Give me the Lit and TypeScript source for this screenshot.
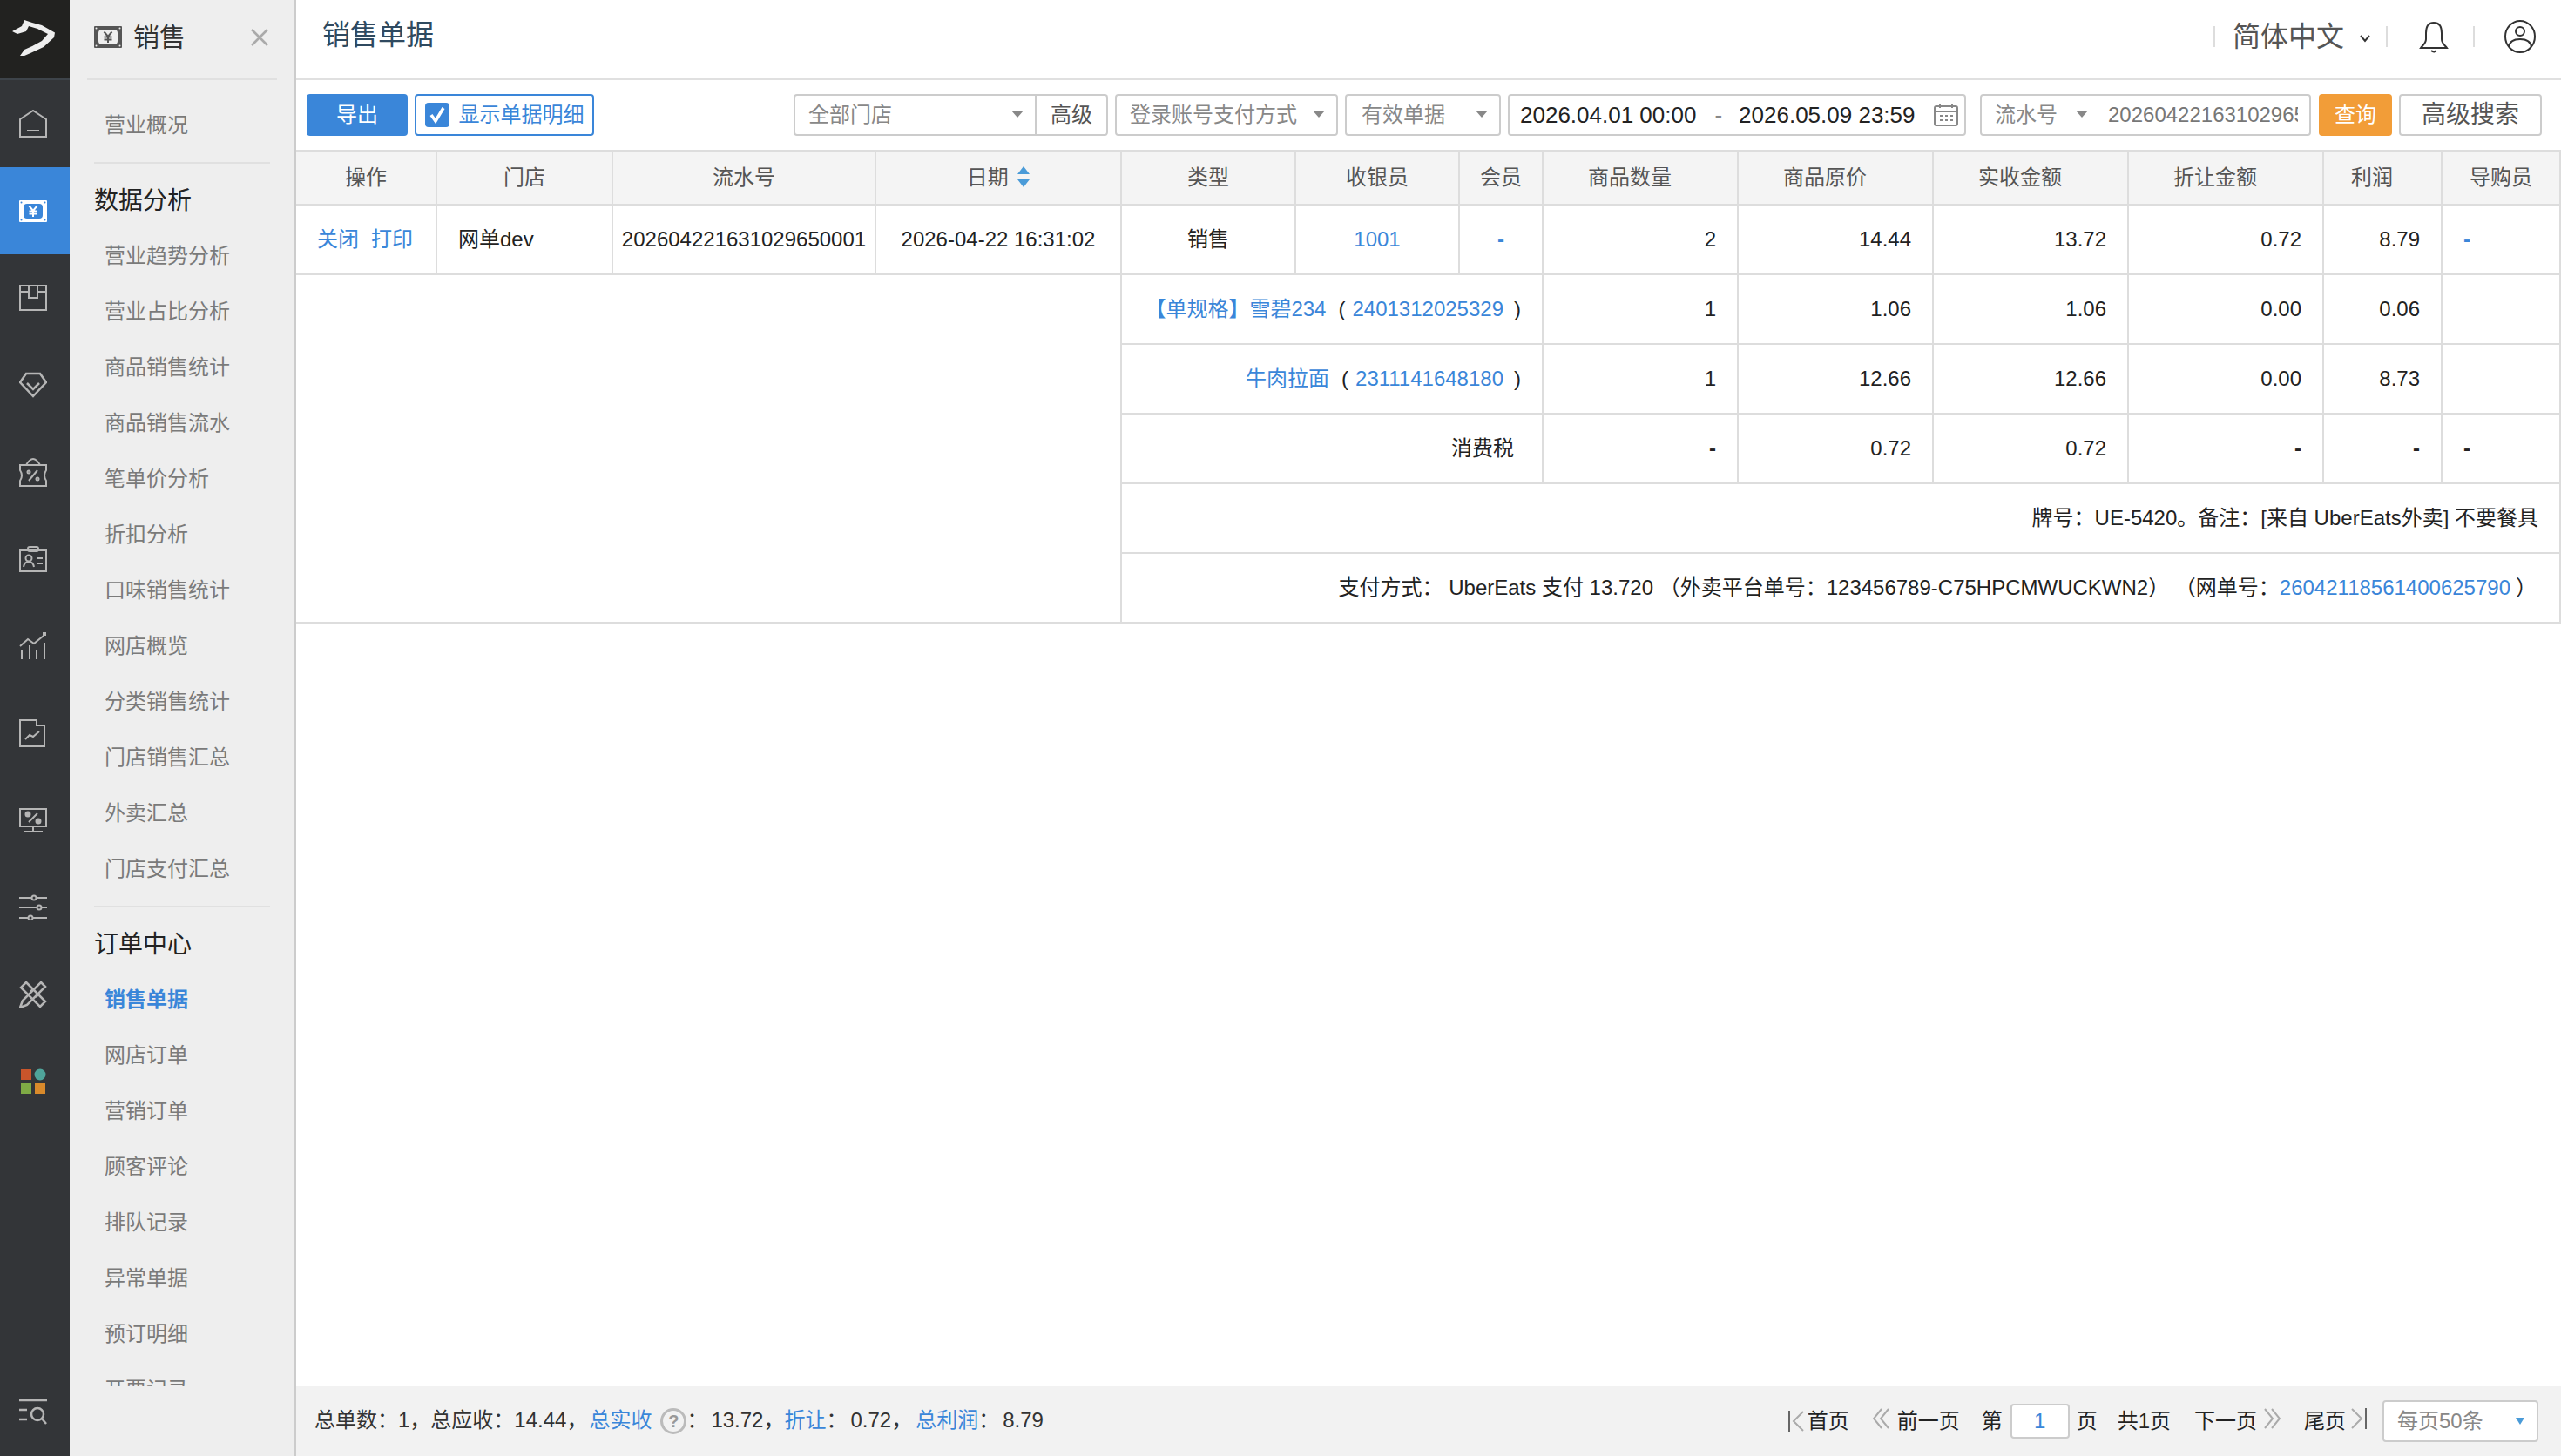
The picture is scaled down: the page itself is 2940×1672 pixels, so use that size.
// app.ts
// Sales receipts page: icon rail, sub navigation, filter bar, detail table, pager

import { LitElement, html, svg, css } from 'lit';
import { customElement } from 'lit/decorators.js';

const moneyIcon = (fg: string, bg: string) => html`
  <svg width="32" height="25" viewBox="0 0 32 25">
    <rect x="0" y="0" width="32" height="25" rx="1" fill=${fg}></rect>
    <rect x="5" y="4" width="22" height="17" rx="4" fill=${bg}></rect>
    <g fill=${bg}>
      <circle cx="2.5" cy="2.5" r="1"></circle>
      <circle cx="29.5" cy="2.5" r="1"></circle>
      <circle cx="2.5" cy="22.5" r="1"></circle>
      <circle cx="29.5" cy="22.5" r="1"></circle>
    </g>
    <path d="M11.5 6.5 L16 12 L20.5 6.5 M16 12 V19 M11.5 12.5 H20.5 M11.5 15.5 H20.5" fill="none" stroke=${fg} stroke-width="2"></path>
  </svg>
`;

const railIcons = [
  html`<svg width="32" height="32" viewBox="0 0 32 32" fill="none" stroke="currentColor" stroke-width="2"><path d="M1 31 V11 L16 1 L31 11 V31 Z"></path><path d="M9 24 H23"></path></svg>`,
  moneyIcon('#ffffff', '#3a86d9'),
  html`<svg width="32" height="30" viewBox="0 0 32 30" fill="none" stroke="currentColor" stroke-width="2"><path d="M1 1 H31 V29 H1 Z"></path><path d="M1 8 H11 V1 M21 1 V8 H31 M11 8 V15 H21 V8"></path></svg>`,
  html`<svg width="32" height="30" viewBox="0 0 32 30" fill="none" stroke="currentColor" stroke-width="2.5"><path d="M8 2 H24 L31 12 L16 28 L1 12 Z"></path><path d="M9 13 L16 20 L23 13"></path></svg>`,
  html`<svg width="32" height="34" viewBox="0 0 32 34" fill="none" stroke="currentColor" stroke-width="2"><path d="M1 9 H31 V15 Q27 21 31 27 V33 H1 V27 Q5 21 1 15 Z"></path><path d="M8 9 Q12 2 16 2 Q20 2 24 9"></path><path d="M11 27 L21 15"></path><circle cx="11" cy="17" r="1.5"></circle><circle cx="21" cy="25" r="1.5"></circle></svg>`,
  html`<svg width="32" height="30" viewBox="0 0 32 30" fill="none" stroke="currentColor" stroke-width="2"><path d="M1 5 H31 V29 H1 Z"></path><rect x="10" y="1" width="12" height="5" rx="2"></rect><circle cx="11" cy="14" r="3.5"></circle><path d="M5 24 Q6 18 11 18 Q16 18 17 24 M21 14 H27 M21 20 H27"></path></svg>`,
  html`<svg width="32" height="32" viewBox="0 0 32 32" fill="none" stroke="currentColor" stroke-width="2"><path d="M1 16 L10 8 L17 13 L28 4"></path><rect x="27" y="0" width="4" height="4" fill="currentColor" stroke="none"></rect><path d="M3 31 V21 M12 31 V15 M20 31 V20 M29 31 V12"></path></svg>`,
  html`<svg width="30" height="32" viewBox="0 0 30 32" fill="none" stroke="currentColor" stroke-width="2"><path d="M1 1 H20 V7 H29 V31 H1 Z"></path><path d="M7 23 L12 18 L16 20 L23 14"></path></svg>`,
  html`<svg width="32" height="28" viewBox="0 0 32 28" fill="none" stroke="currentColor" stroke-width="2"><rect x="1" y="1" width="30" height="20"></rect><path d="M16 21 V27 M5 27 H27 M11 16 L21 6"></path><circle cx="10" cy="7" r="2.5" fill="currentColor"></circle><circle cx="22" cy="15" r="2.5" fill="currentColor"></circle></svg>`,
  html`<svg width="32" height="30" viewBox="0 0 32 30" fill="none" stroke="currentColor" stroke-width="2"><path d="M0 4 H32 M0 15 H32 M0 27 H32"></path><circle cx="17" cy="4" r="2.5" fill="#333538"></circle><circle cx="23" cy="15" r="2.5" fill="#333538"></circle><circle cx="13" cy="27" r="2.5" fill="#333538"></circle></svg>`,
  html`<svg width="32" height="32" viewBox="0 0 32 32" fill="none" stroke="currentColor" stroke-width="2.5"><path d="M8 2 L30 24 L24 30 L2 8 Z"></path><path d="M25 2 L30 7 L9 28 L1 31 L4 23 Z"></path><path d="M13 13 L16 10 M19 19 L22 16"></path></svg>`,
  html`<svg width="32" height="30" viewBox="0 0 32 30"><rect x="2" y="1" width="12" height="12" fill="#c8552b"></rect><circle cx="24" cy="7" r="6.5" fill="#4fa49a"></circle><rect x="2" y="17" width="12" height="12" fill="#7faa45"></rect><rect x="18" y="17" width="12" height="12" fill="#d98a2b"></rect></svg>`,
];

const chevrons = (flip: boolean, bar: boolean) => html`
  <svg class="pg-ico" width="20" height="26" viewBox="0 0 20 26" fill="none" stroke="#aaa" stroke-width="2">
    <g transform=${flip ? 'translate(20 0) scale(-1 1)' : 'translate(0 0)'}>
      ${bar
        ? svg`<path d="M1 1 V25" stroke="#666"></path><path d="M17 2 L6 13 L17 24"></path>`
        : svg`<path d="M10 2 L1 13 L10 24 M18 2 L9 13 L18 24"></path>`}
    </g>
  </svg>
`;

interface NavGroup {
  title?: string;
  items: string[];
}

const navGroups: NavGroup[] = [
  { items: ['营业概况'] },
  {
    title: '数据分析',
    items: ['营业趋势分析', '营业占比分析', '商品销售统计', '商品销售流水', '笔单价分析', '折扣分析', '口味销售统计', '网店概览', '分类销售统计', '门店销售汇总', '外卖汇总', '门店支付汇总'],
  },
  {
    title: '订单中心',
    items: ['销售单据', '网店订单', '营销订单', '顾客评论', '排队记录', '异常单据', '预订明细', '开票记录'],
  },
];

const columns = ['操作', '门店', '流水号', '日期', '类型', '收银员', '会员', '商品数量', '商品原价', '实收金额', '折让金额', '利润', '导购员'];
const colWidths = [162, 202, 302, 282, 200, 188, 96, 224, 224, 224, 224, 136, 136];

@customElement('app-root')
export class AppRoot extends LitElement {
  static styles = css`
    :host {
      display: flex;
      width: 2940px;
      height: 1672px;
      overflow: hidden;
      background: #fff;
      color: #222;
      font-family: 'Liberation Sans', 'Noto Sans CJK SC', sans-serif;
      font-size: 24px;
      line-height: 28px;
    }

    * {
      box-sizing: border-box;
    }

    a {
      color: #3a86d9;
      text-decoration: none;
    }

    /* icon rail */
    .rail {
      width: 80px;
      flex: none;
      display: flex;
      flex-direction: column;
      background: #333538;
      color: #b5b5b5;
    }

    .logo {
      height: 92px;
      flex: none;
      display: flex;
      align-items: center;
      padding-left: 12px;
      background: #222220;
      border-bottom: 2px solid #3e444a;
    }

    .rail-item {
      height: 100px;
      flex: none;
      display: flex;
      align-items: center;
      padding-left: 22px;
    }

    .rail-item.active {
      background: #3a86d9;
    }

    .rail-bottom {
      margin-top: auto;
    }

    /* sub navigation */
    .sub {
      width: 260px;
      flex: none;
      display: flex;
      flex-direction: column;
      background: #eee;
      border-right: 2px solid #ccc;
    }

    .sub-head {
      height: 92px;
      flex: none;
      margin: 0 20px;
      padding: 0 10px 5px 8px;
      display: flex;
      align-items: center;
      border-bottom: 2px solid #e0e0e0;
      color: #333;
      font-size: 30px;
    }

    .sub-head span {
      margin-left: 13px;
    }

    .sub-head svg:last-child {
      margin-left: auto;
    }

    .sub-list {
      height: 1500px;
      flex: none;
      overflow: hidden;
      padding-top: 20px;
    }

    .nav-group + .nav-group {
      margin: 10px 28px 0;
      border-top: 2px solid #e0e0e0;
      padding-top: 10px;
    }

    .nav-group:first-child {
      margin: 0 28px;
    }

    .nav-title {
      height: 64px;
      line-height: 66px;
      font-size: 28px;
      color: #222;
    }

    .nav-item {
      height: 64px;
      line-height: 64px;
      padding-left: 12px;
      color: #7a7a7a;
    }

    .nav-item.active {
      color: #3a86d9;
      font-weight: 700;
    }

    /* main column */
    .main {
      flex: 1;
      min-width: 0;
      display: flex;
      flex-direction: column;
    }

    .top {
      height: 92px;
      flex: none;
      display: flex;
      align-items: center;
      padding: 0 29px 6px 30px;
      border-bottom: 2px solid #e0e0e0;
    }

    .title {
      margin-bottom: 4px;
      font-size: 32px;
      color: #2f4a60;
    }

    .top-right {
      margin-left: auto;
      display: flex;
      align-items: center;
    }

    .sep {
      width: 2px;
      height: 24px;
      background: #ddd;
    }

    .lang {
      margin-left: 20px;
      font-size: 32px;
      color: #555;
    }

    .lang-arrow {
      margin: 4px 18px 0 18px;
    }

    .bell {
      margin: 2px 28px 0 36px;
    }

    .user {
      margin-left: 34px;
    }

    /* filter bar */
    .bar {
      height: 48px;
      flex: none;
      margin: 16px 0;
      padding: 0 22px 0 12px;
      display: flex;
    }

    .btn {
      height: 48px;
      display: flex;
      align-items: center;
      justify-content: center;
      border-radius: 4px;
      flex: none;
    }

    .btn.primary {
      width: 116px;
      background: #3a86d9;
      color: #fff;
    }

    .btn.check {
      width: 206px;
      margin-left: 8px;
      border: 2px solid #3a86d9;
      color: #3a86d9;
      gap: 11px;
    }

    .box {
      width: 28px;
      height: 28px;
      border-radius: 4px;
      background: #3a86d9;
      display: flex;
      align-items: center;
      justify-content: center;
    }

    .filters {
      margin-left: auto;
      display: flex;
    }

    .field {
      height: 48px;
      flex: none;
      display: flex;
      align-items: center;
      position: relative;
      border: 2px solid #ccc;
      border-radius: 4px;
      color: #888;
      white-space: nowrap;
    }

    .select {
      padding-left: 15px;
      margin-left: 8px;
    }

    .select::after {
      content: '';
      position: absolute;
      right: 13px;
      top: 17px;
      border-style: solid;
      border-width: 8px 7px 0;
      border-color: #888 transparent transparent;
    }

    .w-store {
      width: 279px;
      margin-left: 0;
      border-radius: 4px 0 0 4px;
    }

    .w-pay {
      width: 256px;
    }

    .w-valid {
      width: 179px;
      padding-left: 17px;
    }

    .adv {
      width: 82px;
      justify-content: center;
      border-left: none;
      border-radius: 0 4px 4px 0;
      color: #555;
    }

    .date {
      width: 526px;
      margin-left: 8px;
      padding-left: 12px;
      font-size: 26px;
      color: #222;
    }

    .dash {
      margin: 0 19px 0 21px;
      color: #888;
    }

    .cal {
      margin-left: 21px;
    }

    .combo {
      width: 380px;
      margin-left: 16px;
    }

    .combo-key {
      width: 134px;
      height: 100%;
      flex: none;
      padding-left: 15px;
      display: flex;
      align-items: center;
      position: relative;
    }

    .combo-key::after {
      content: '';
      position: absolute;
      right: 12px;
      top: 17px;
      border-style: solid;
      border-width: 8px 7px 0;
      border-color: #888 transparent transparent;
    }

    .combo-value {
      margin: 0 13px 0 11px;
      overflow: hidden;
      color: #777;
    }

    .btn.query {
      width: 84px;
      margin-left: 9px;
      background: #f29d38;
      color: #fff;
    }

    .btn.more {
      width: 164px;
      margin-left: 8px;
      border: 2px solid #ccc;
      font-size: 28px;
      color: #555;
    }

    /* table */
    table {
      width: 2600px;
      table-layout: fixed;
      border-collapse: separate;
      border-spacing: 0;
      flex: none;
    }

    th,
    td {
      height: 80px;
      padding: 0 24px;
      border-right: 2px solid #ddd;
      border-bottom: 2px solid #ddd;
      font-weight: 400;
      white-space: nowrap;
      text-align: center;
    }

    th {
      height: 64px;
      padding: 0;
      border-top: 2px solid #ddd;
      background: #f4f4f4;
      color: #555;
    }

    th.shift {
      padding-right: 24px;
    }

    td.nopad {
      padding: 0;
    }

    td.num {
      text-align: right;
    }

    td.left {
      text-align: left;
    }

    td.pay {
      padding-right: 26px;
    }

    .pay-end {
      margin-left: 6px;
    }

    .sort {
      display: inline-block;
      margin-left: 4px;
      vertical-align: -3px;
    }

    .ops a + a {
      margin-left: 14px;
    }

    .open {
      margin: 0 8px 0 14px;
    }

    .close {
      margin-left: 12px;
    }

    .tax {
      padding-right: 32px;
    }

    .nil {
      font-weight: 700;
    }

    /* footer */
    .foot {
      height: 80px;
      flex: none;
      margin-top: auto;
      display: flex;
      align-items: center;
      padding: 0 26px 0 21px;
      background: #f2f2f2;
      color: #333;
    }

    .foot a,
    .foot .val {
      margin-left: 4px;
    }

    .foot a.m2 {
      margin-left: 2px;
    }

    .foot a.m0 {
      margin-left: 0;
    }

    .help {
      display: inline-block;
      width: 30px;
      height: 30px;
      margin-left: 10px;
      border: 3px solid #bbb;
      border-radius: 50%;
      line-height: 24px;
      text-align: center;
      vertical-align: middle;
      font-size: 20px;
      font-weight: 700;
      color: #999;
    }

    .pager {
      margin-left: auto;
      display: flex;
      align-items: center;
      color: #222;
    }

    .pg-ico {
      flex: none;
    }

    .pg-gap {
      margin-left: 27px;
    }

    .pg-gap.near {
      margin-left: 25px;
    }

    .pg-gap.tight {
      margin-left: 23px;
    }

    .pg-lead {
      margin-left: 2px;
    }

    .pg-lead.mid {
      margin-left: 8px;
    }

    .pg-lead.wide {
      margin-left: 7px;
    }

    .pg-lead.end {
      margin-left: 4px;
    }

    .pg-back {
      margin-left: 27px;
      flex: none;
    }

    .page-input {
      width: 68px;
      height: 40px;
      margin: 0 8px 0 9px;
      display: flex;
      align-items: center;
      justify-content: center;
      background: #fff;
      border: 2px solid #ccc;
      border-radius: 4px;
      color: #3a86d9;
    }

    .per-page {
      width: 179px;
      height: 48px;
      margin-left: 18px;
      padding-left: 15px;
      display: flex;
      align-items: center;
      position: relative;
      background: #fff;
      border: 2px solid #ccc;
      border-radius: 4px;
      color: #888;
    }

    .per-page::after {
      content: '';
      position: absolute;
      right: 14px;
      top: 18px;
      border-style: solid;
      border-width: 8px 5px 0;
      border-color: #4a9bd8 transparent transparent;
    }
  `;

  private renderRail() {
    return html`
      <nav class="rail">
        <div class="logo">
          <svg width="54" height="46" viewBox="0 0 54 46" fill="#eee">
            <path d="M2 14 L13 8 L16 1 L25 4 L36 7 L51 15.5 L50 21 L38 32 L23 39 L16 42 L11 42 L16 35 L25 31 L36 25 L43 17 L31 11 L21 8 L18 14 L8 17 Z"></path>
          </svg>
        </div>
        ${railIcons.map((icon, i) => html`<div class="rail-item ${i === 1 ? 'active' : ''}">${icon}</div>`)}
        <div class="rail-item rail-bottom">
          <svg width="32" height="32" viewBox="0 0 32 32" fill="none" stroke="currentColor" stroke-width="2.5">
            <path d="M0 2 H32 M0 13 H9 M0 24 H9"></path>
            <circle cx="21" cy="18" r="7"></circle>
            <path d="M26 23 L31 29"></path>
          </svg>
        </div>
      </nav>
    `;
  }

  private renderSub() {
    return html`
      <aside class="sub">
        <div class="sub-head">
          ${moneyIcon('#555', '#eee')}
          <span>销售</span>
          <svg width="20" height="20" viewBox="0 0 20 20" stroke="#aaa" stroke-width="2.5"><path d="M1 1 L19 19 M19 1 L1 19"></path></svg>
        </div>
        <div class="sub-list">
          ${navGroups.map(group => html`
            <div class="nav-group">
              ${group.title ? html`<div class="nav-title">${group.title}</div>` : ''}
              ${group.items.map(item => html`<div class="nav-item ${item === '销售单据' ? 'active' : ''}">${item}</div>`)}
            </div>
          `)}
        </div>
      </aside>
    `;
  }

  private renderTop() {
    return html`
      <header class="top">
        <div class="title">销售单据</div>
        <div class="top-right">
          <i class="sep"></i>
          <span class="lang">简体中文</span>
          <svg class="lang-arrow" width="12" height="10" viewBox="0 0 12 10" fill="none" stroke="#333" stroke-width="2"><path d="M1 2 L6 8 L11 2"></path></svg>
          <i class="sep"></i>
          <svg class="bell" width="34" height="38" viewBox="0 0 34 38" fill="none" stroke="#333" stroke-width="2">
            <path d="M17 2 C10 2 8 8 8 14 V21 C8 26 4 28 2 31 H32 C30 28 26 26 26 21 V14 C26 8 24 2 17 2 Z"></path>
            <path d="M14 34 Q17 37 20 34"></path>
          </svg>
          <i class="sep"></i>
          <svg class="user" width="36" height="38" viewBox="0 0 36 38" fill="none" stroke="#333" stroke-width="2">
            <ellipse cx="18" cy="19" rx="17" ry="18"></ellipse>
            <circle cx="18" cy="13" r="5"></circle>
            <path d="M5 31 C6 24 12 22 18 22 C24 22 30 24 31 31"></path>
          </svg>
        </div>
      </header>
    `;
  }

  private renderBar() {
    return html`
      <div class="bar">
        <div class="btn primary">导出</div>
        <div class="btn check">
          <span class="box">
            <svg width="18" height="20" viewBox="0 0 18 20" fill="none" stroke="#fff" stroke-width="3.5"><path d="M2 10 L7 17 L16 2"></path></svg>
          </span>
          显示单据明细
        </div>
        <div class="filters">
          <div class="field select w-store">全部门店</div>
          <div class="field adv">高级</div>
          <div class="field select w-pay">登录账号支付方式</div>
          <div class="field select w-valid">有效单据</div>
          <div class="field date">
            <span>2026.04.01 00:00</span>
            <span class="dash">-</span>
            <span>2026.05.09 23:59</span>
            <svg class="cal" width="28" height="26" viewBox="0 0 28 26" fill="none" stroke="#888" stroke-width="2">
              <rect x="1" y="3" width="26" height="22" rx="2"></rect>
              <path d="M1 9 H27 M7 0 V5 M21 0 V5"></path>
              <path d="M7 14 H10 M13 14 H16 M19 14 H22 M7 19 H10 M13 19 H16 M19 19 H22"></path>
            </svg>
          </div>
          <div class="field combo">
            <div class="combo-key">流水号</div>
            <div class="combo-value">202604221631029650001</div>
          </div>
          <div class="btn query">查询</div>
          <div class="btn more">高级搜索</div>
        </div>
      </div>
    `;
  }

  private renderTable() {
    return html`
      <table>
        <colgroup>${colWidths.map(w => html`<col style="width:${w}px" />`)}</colgroup>
        <thead>
          <tr>
            ${columns.map((c, i) => html`
              <th class=${i >= 7 && i <= 11 ? 'shift' : ''}>
                ${c}${c === '日期' ? html`
                  <svg class="sort" width="14" height="24" viewBox="0 0 14 24" fill="#4a9bd8"><path d="M7 0 L14 9 H0 Z M0 15 H14 L7 24 Z"></path></svg>
                ` : ''}
              </th>
            `)}
          </tr>
        </thead>
        <tbody>
          <tr>
            <td class="left ops"><a>关闭</a><a>打印</a></td>
            <td class="left">网单dev</td>
            <td class="nopad">202604221631029650001</td>
            <td class="nopad">2026-04-22 16:31:02</td>
            <td>销售</td>
            <td><a>1001</a></td>
            <td><a class="nil">-</a></td>
            <td class="num">2</td>
            <td class="num">14.44</td>
            <td class="num">13.72</td>
            <td class="num">0.72</td>
            <td class="num">8.79</td>
            <td class="left"><a class="nil">-</a></td>
          </tr>
          <tr>
            <td rowspan="5" colspan="4"></td>
            <td colspan="3" class="num"><a>【单规格】雪碧234</a><span class="open">(</span><a>2401312025329</a><span class="close">)</span></td>
            <td class="num">1</td>
            <td class="num">1.06</td>
            <td class="num">1.06</td>
            <td class="num">0.00</td>
            <td class="num">0.06</td>
            <td></td>
          </tr>
          <tr>
            <td colspan="3" class="num"><a>牛肉拉面</a><span class="open">(</span><a>2311141648180</a><span class="close">)</span></td>
            <td class="num">1</td>
            <td class="num">12.66</td>
            <td class="num">12.66</td>
            <td class="num">0.00</td>
            <td class="num">8.73</td>
            <td></td>
          </tr>
          <tr>
            <td colspan="3" class="num tax">消费税</td>
            <td class="num nil">-</td>
            <td class="num">0.72</td>
            <td class="num">0.72</td>
            <td class="num nil">-</td>
            <td class="num nil">-</td>
            <td class="left nil">-</td>
          </tr>
          <tr>
            <td colspan="9" class="num">牌号：UE-5420。备注：[来自 UberEats外卖] 不要餐具</td>
          </tr>
          <tr>
            <td colspan="9" class="num pay">支付方式： UberEats 支付 13.720 （外卖平台单号：123456789-C75HPCMWUCKWN2） （网单号：<a>26042118561400625790</a><span class="pay-end">）</span></td>
          </tr>
        </tbody>
      </table>
    `;
  }

  private renderFoot() {
    return html`
      <footer class="foot">
        <div>
          总单数：1，总应收：14.44，<a class="m2">总实收</a><span class="help">?</span>：<span class="val">13.72，</span><a class="m0">折让</a>：<span class="val">0.72，</span><a>总利润</a>：<span class="val">8.79</span>
        </div>
        <div class="pager">
          ${chevrons(false, true)}
          <span class="pg-lead">首页</span>
          <span class="pg-back">${chevrons(false, false)}</span>
          <span class="pg-lead mid">前一页</span>
          <span class="pg-gap near">第</span>
          <div class="page-input">1</div>
          <span>页</span>
          <span class="pg-gap tight">共1页</span>
          <span class="pg-gap">下一页</span>
          <span class="pg-lead wide">${chevrons(true, false)}</span>
          <span class="pg-gap">尾页</span>
          <span class="pg-lead end">${chevrons(true, true)}</span>
          <div class="per-page">每页50条</div>
        </div>
      </footer>
    `;
  }

  render() {
    return html`
      ${this.renderRail()}
      ${this.renderSub()}
      <main class="main">
        ${this.renderTop()}
        ${this.renderBar()}
        ${this.renderTable()}
        ${this.renderFoot()}
      </main>
    `;
  }
}

declare global {
  interface HTMLElementTagNameMap {
    'app-root': AppRoot;
  }
}
